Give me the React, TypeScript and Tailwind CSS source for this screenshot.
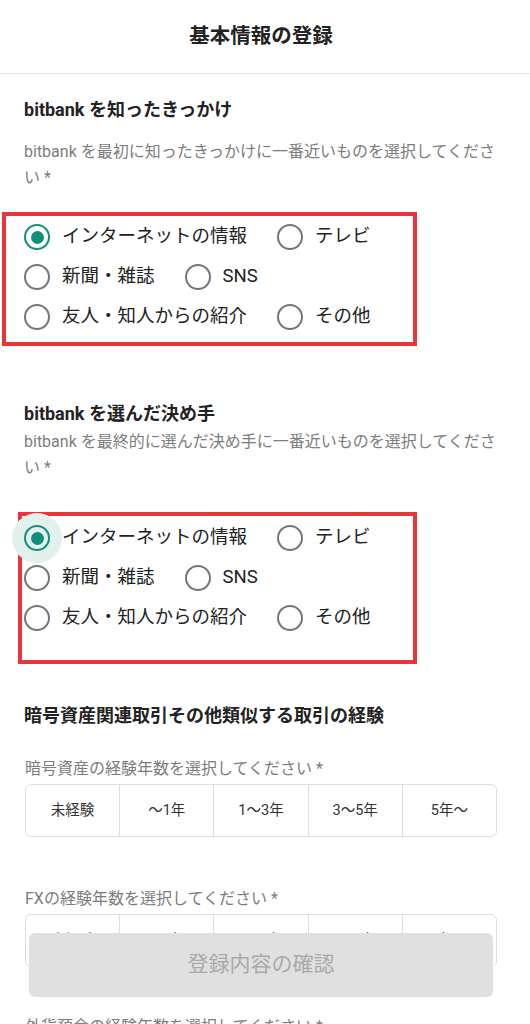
import { useState } from "react";

const font = "font-['Roboto','Noto_Sans_CJK_JP',sans-serif]";

const sources = [
	["インターネットの情報", "テレビ"],
	["新聞・雑誌", "SNS"],
	["友人・知人からの紹介", "その他"]
];

const years = ["未経験", "〜1年", "1〜3年", "3〜5年", "5年〜"];

function Radio({ checked, ripple }: { checked: boolean; ripple?: boolean }) {
	return (
		<span className="relative flex h-[26px] w-[26px] shrink-0 items-center justify-center">
			{ripple && (
				<span className="absolute left-[-12px] top-[-12px] h-[50px] w-[50px] rounded-full bg-[#e2f0ee]"></span>
			)}
			<span
				className={`relative flex h-[26px] w-[26px] items-center justify-center rounded-full border-[2.5px] ${
					checked ? "border-[#128f7a]" : "border-[#767676]"
				}`}
			>
				{checked && <span className="h-[13px] w-[13px] rounded-full bg-[#128f7a]"></span>}
			</span>
		</span>
	);
}

function RadioGroup({ ripple }: { ripple?: boolean }) {
	const [value, setValue] = useState("インターネットの情報");
	return (
		<div>
			{sources.map((row, i) => (
				<div key={i} className="flex h-[40px] items-center">
					{row.map((label) => (
						<label
							key={label}
							onClick={() => setValue(label)}
							className="mr-[30px] flex cursor-pointer items-center gap-[12px]"
						>
							<Radio checked={value === label} ripple={ripple && value === label} />
							<span className="text-[18.5px] text-[#222]">{label}</span>
						</label>
					))}
				</div>
			))}
		</div>
	);
}

function YearPicker() {
	return (
		<div className="mt-[3px] flex h-[53px] rounded-[6px] border border-[#dedede]">
			{years.map((y, i) => (
				<button
					key={y}
					className={`flex flex-1 items-center justify-center text-[14.5px] text-[#333] ${
						i > 0 ? "border-l border-[#dedede]" : ""
					}`}
				>
					{y}
				</button>
			))}
		</div>
	);
}

export default function App() {
	return (
		<div className={`min-h-screen bg-white ${font}`}>
			{/* ヘッダー */}
			<div className="flex h-[74px] items-center justify-center border-b border-[#e6e6e6] pr-[8px]">
				<h1 className="text-[20.5px] font-bold text-[#222]">基本情報の登録</h1>
			</div>

			<div className="pb-[160px] pl-[24px] pr-[33px]">
				{/* bitbank を知ったきっかけ */}
				<h2 className="mt-[24px] text-[18px] leading-[24px] font-bold text-[#222]">
					bitbank を知ったきっかけ
				</h2>
				<p className="mt-[17px] text-[16px] leading-[26px] text-[#7d7d7d]">
					bitbank を最初に知ったきっかけに一番近いものを選択してください *
				</p>
				<div className="ml-[-22px] mt-[21px] w-[415px] border-[4px] border-[#e8343a] pb-[5px] pl-[18px] pt-[1px]">
					<RadioGroup />
				</div>

				{/* bitbank を選んだ決め手 */}
				<h2 className="mt-[56px] text-[18px] leading-[24px] font-bold text-[#222]">
					bitbank を選んだ決め手
				</h2>
				<p className="mt-[3px] text-[16px] leading-[26px] text-[#7d7d7d]">
					bitbank を最終的に選んだ決め手に一番近いものを選択してください *
				</p>
				<div className="ml-[-6px] mt-[31px] w-[399px] border-[4px] border-[#e8343a] pb-[22px] pl-[2px] pt-[2px]">
					<RadioGroup ripple />
				</div>

				{/* 取引の経験 */}
				<h2 className="mt-[40px] text-[18px] leading-[24px] font-bold text-[#222]">
					暗号資産関連取引その他類似する取引の経験
				</h2>
				<p className="mt-[29px] ml-[1px] text-[16px] leading-[24px] text-[#7d7d7d]">
					暗号資産の経験年数を選択してください *
				</p>
				<div className="ml-[1px]">
					<YearPicker />
				</div>

				<p className="mt-[50px] ml-[1px] text-[16px] leading-[24px] text-[#7d7d7d]">
					FXの経験年数を選択してください *
				</p>
				<div className="ml-[1px]">
					<YearPicker />
				</div>

				<p className="mt-[48px] ml-[1px] text-[16px] leading-[24px] text-[#7d7d7d]">
					外貨預金の経験年数を選択してください *
				</p>
				<div className="ml-[1px]">
					<YearPicker />
				</div>
			</div>

			{/* 確認ボタン */}
			<div className="fixed bottom-[27px] left-[29px] right-[37px]">
				<button
					disabled
					className="flex h-[64px] w-full items-center justify-center rounded-[6px] bg-[#e0e0e0] text-[21px] text-[#a9a9a9]"
				>
					登録内容の確認
				</button>
			</div>
		</div>
	);
}
